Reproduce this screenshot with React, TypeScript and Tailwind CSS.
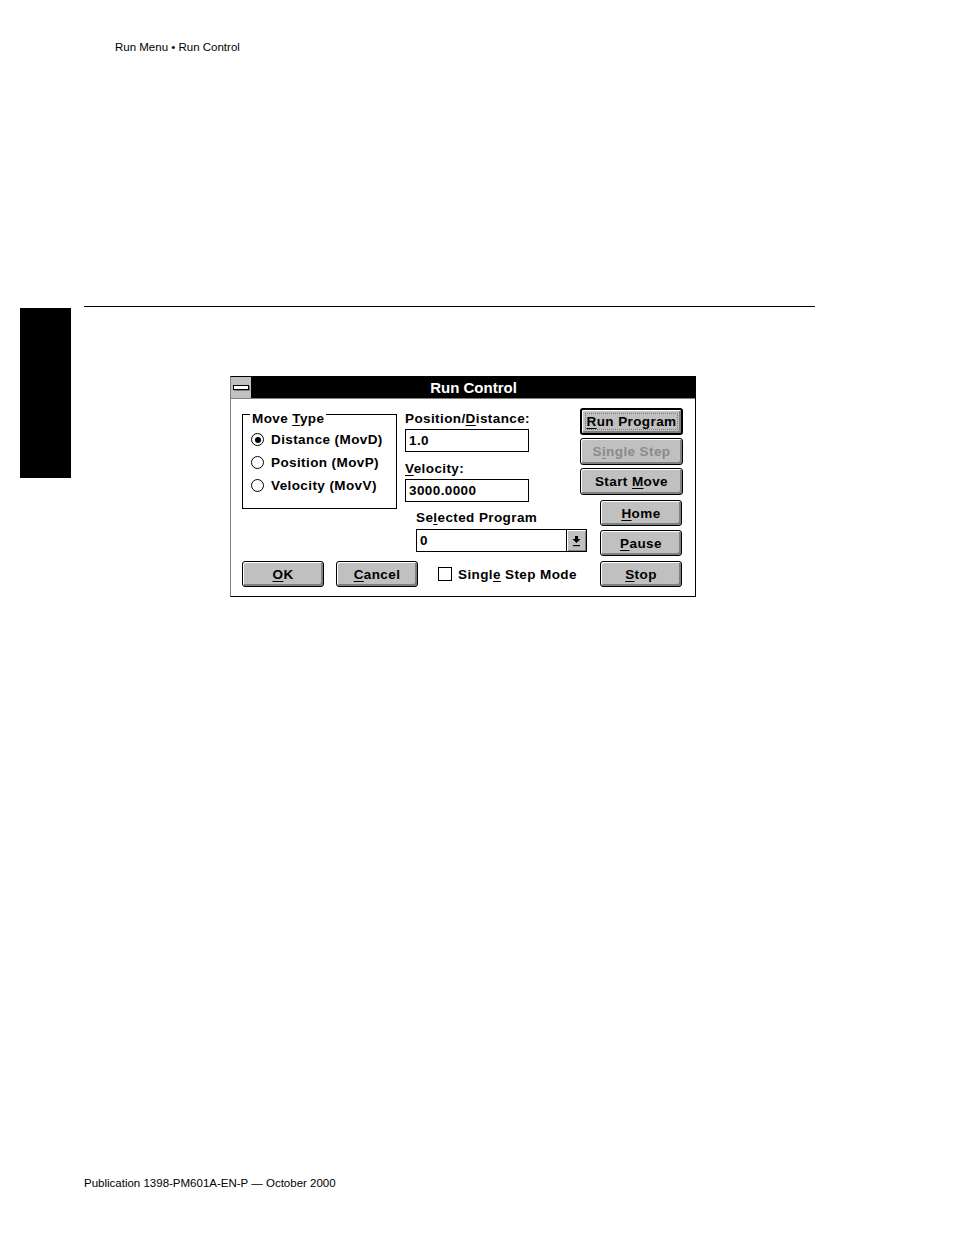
import React from "react";

const U = ({ c }: { c: string }) => (
  <span className="underline underline-offset-[2px] decoration-1">{c}</span>
);

function Btn({
  children,
  className,
  isDefault,
  disabled,
}: {
  children: React.ReactNode;
  className: string;
  isDefault?: boolean;
  disabled?: boolean;
}) {
  return (
    <div
      className={
        (isDefault ? "border-2 " : "border ") +
        "shrink-0 flex items-center justify-center bg-[#c0c0c0] border-black rounded-[3px] shadow-[inset_1px_1px_0_#ffffff,inset_-2px_-2px_0_#808080] " +
        (disabled ? "text-[#8a8a8a] " : "text-black ") +
        className
      }
    >
      <span className="whitespace-nowrap">{children}</span>
    </div>
  );
}

function Radio({ sel, children }: { sel?: boolean; children: React.ReactNode }) {
  return (
    <div className="h-[23px] flex items-center">
      <div className="w-[13px] h-[13px] rounded-full border border-black bg-white flex items-center justify-center shrink-0">
        {sel && <div className="w-[6px] h-[6px] rounded-full bg-black" />}
      </div>
      <span className="ml-[7px] whitespace-nowrap">{children}</span>
    </div>
  );
}

export default function App() {
  return (
    <div className="w-[954px] h-[1235px] bg-white text-black font-['Liberation_Sans',Arial,sans-serif]">
      <div className="pt-[40px] pl-[115px] text-[11.5px] leading-[14px]">
        Run Menu • Run Control
      </div>
      <div className="mt-[252px] ml-[84px] w-[731px] h-px bg-black" />
      <div className="flex items-start">
        <div className="ml-[20px] mt-[1px] w-[51px] h-[170px] bg-black shrink-0" />
        <div className="ml-[159px] mt-[69px] w-[466px] h-[221px] shrink-0 border border-black border-l-[#808080] bg-white flex flex-col font-bold text-[13.5px] leading-[15px] tracking-[0.4px]">
          {/* Title bar */}
          <div className="box-content h-[21px] bg-black flex border-b border-[#808080]">
            <div className="w-[21px] h-full bg-[#c0c0c0] border-r border-black flex items-center justify-center">
              <div className="w-[16px] h-[5px] border border-black bg-white shadow-[1px_1px_0_#808080]" />
            </div>
            <div className="flex-1 flex items-center justify-center text-white text-[15px] leading-[17px] tracking-normal">
              Run Control
            </div>
          </div>
          {/* Body */}
          <div className="flex pt-[9px] pl-[11px]">
            <div className="w-[338px] shrink-0 pt-[3px] flex flex-col">
              <div className="flex items-start">
                <div className="relative mt-[3px] w-[155px] h-[95px] shrink-0 border border-black pt-[13px] pl-[8px]">
                  <div className="absolute left-[7px] top-[-4px] bg-white px-[2px] whitespace-nowrap">
                    Move <U c="T" />ype
                  </div>
                  <Radio sel>Distance (MovD)</Radio>
                  <Radio>Position (MovP)</Radio>
                  <Radio>Velocity (MovV)</Radio>
                </div>
                <div className="ml-[8px] w-[124px] shrink-0 flex flex-col">
                  <div className="whitespace-nowrap">
                    Position/<U c="D" />istance:
                  </div>
                  <div className="mt-[3px] h-[23px] border border-black flex items-center pl-[3px]">1.0</div>
                  <div className="mt-[9px] whitespace-nowrap">
                    <U c="V" />elocity:
                  </div>
                  <div className="mt-[3px] h-[23px] border border-black flex items-center pl-[3px]">3000.0000</div>
                  <div className="mt-[8px] ml-[11px] whitespace-nowrap">
                    Se<U c="l" />ected Program
                  </div>
                  <div className="mt-[4px] ml-[11px] w-[171px] h-[23px] shrink-0 border border-black flex">
                    <div className="flex-1 flex items-center pl-[3px]">0</div>
                    <div className="w-[20px] border-l border-black bg-[#c0c0c0] shadow-[inset_1px_1px_0_#ffffff,inset_-1px_-1px_0_#808080] flex items-center justify-center">
                      <svg width="9" height="12" viewBox="0 0 9 12">
                        <rect x="3" y="1" width="3" height="3" fill="#000" />
                        <polygon points="0.5,4 8.5,4 4.5,8" fill="#000" />
                        <rect x="1" y="10" width="7" height="1.2" fill="#000" />
                      </svg>
                    </div>
                  </div>
                </div>
              </div>
              <div className="flex items-center mt-[9px]">
                <Btn className="w-[82px] h-[26px]">
                  <U c="O" />K
                </Btn>
                <Btn className="ml-[12px] w-[82px] h-[26px]">
                  <U c="C" />ancel
                </Btn>
                <div className="ml-[20px] w-[14px] h-[14px] border border-black bg-white shrink-0" />
                <span className="ml-[6px] whitespace-nowrap">
                  Singl<U c="e" /> Step Mode
                </span>
              </div>
            </div>
            <div className="w-[103px] shrink-0 flex flex-col">
              <Btn isDefault className="w-[103px] h-[27px]">
                <span className="border border-dotted border-[#7a7a7a] px-[1px] leading-[14px]">
                  <U c="R" />un Program
                </span>
              </Btn>
              <Btn disabled className="mt-[3px] w-[103px] h-[27px]">
                S<U c="i" />ngle Step
              </Btn>
              <Btn className="mt-[3px] w-[103px] h-[27px]">
                Start <U c="M" />ove
              </Btn>
              <Btn className="mt-[5px] ml-[20px] w-[82px] h-[26px]">
                <U c="H" />ome
              </Btn>
              <Btn className="mt-[4px] ml-[20px] w-[82px] h-[26px]">
                <U c="P" />ause
              </Btn>
              <Btn className="mt-[5px] ml-[20px] w-[82px] h-[26px]">
                <U c="S" />top
              </Btn>
            </div>
          </div>
        </div>
      </div>
      <div className="mt-[579px] pl-[84px] text-[11.5px] leading-[14px]">
        Publication 1398-PM601A-EN-P — October 2000
      </div>
    </div>
  );
}
